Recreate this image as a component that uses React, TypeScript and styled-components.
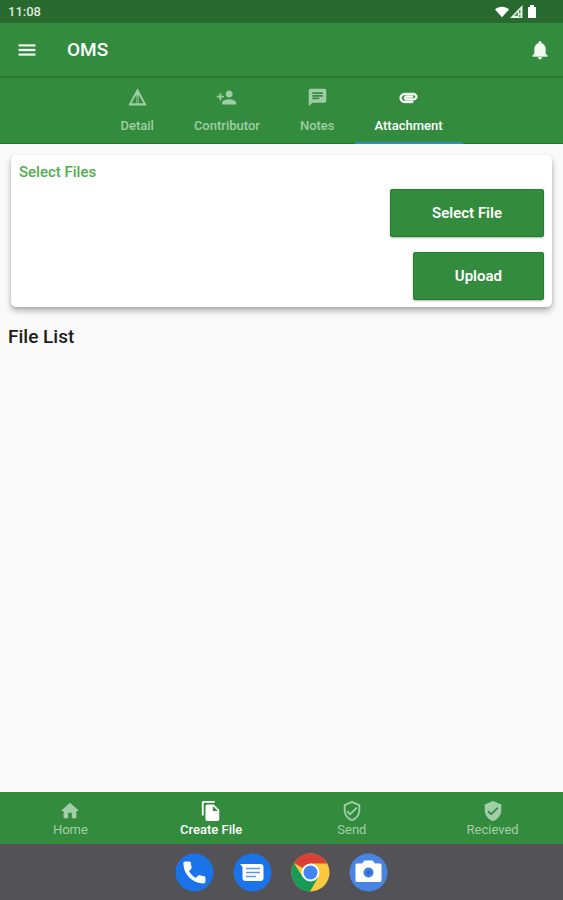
import React, { useState } from "react";
import styled, { createGlobalStyle } from "styled-components";

const GlobalStyle = createGlobalStyle`
  *, *::before, *::after { box-sizing: border-box; }
  body {
    margin: 0;
    background: #fafafa;
    font-family: Roboto, "Liberation Sans", sans-serif;
    color: #1c1c1c;
  }
  button { font: inherit; border: 0; cursor: pointer; }
`;

const GREEN = "#338c3e";

const Screen = styled.div`
  display: flex;
  flex-direction: column;
  min-height: 100vh;
`;

const StatusBar = styled.div`
  display: flex;
  align-items: center;
  justify-content: space-between;
  height: 23px;
  padding: 0 24px 0 8px;
  background: #28692f;
  color: #dcebdd;
  font-size: 13px;
  font-weight: 500;
`;

const StatusIcons = styled.div`
  display: flex;
  align-items: center;
  gap: 1px;
  color: #fff;
`;

const AppBar = styled.header`
  display: flex;
  align-items: center;
  gap: 29px;
  height: 53px;
  padding: 0 12px 0 16px;
  background: ${GREEN};
  color: #fff;
`;

const IconButton = styled.button`
  display: flex;
  padding: 0;
  background: none;
  color: #f2faf2;
`;

const Title = styled.h1`
  flex: 1;
  margin: 0;
  font-size: 19px;
  line-height: 24px;
  font-weight: 500;
`;

const TabBar = styled.div`
  display: flex;
  justify-content: center;
  height: 68px;
  background: ${GREEN};
  box-shadow: inset 0 3px 2px -1px #2a7833, inset 0 -1px 0 #16801f;
`;

const Tab = styled.button<{ $active: boolean }>`
  display: flex;
  flex-direction: column;
  align-items: center;
  gap: 10px;
  padding: 11px 20px 0;
  background: none;
  border-bottom: 2px solid ${(p) => (p.$active ? "#2f8fc4" : "transparent")};
  color: ${(p) => (p.$active ? "#fff" : "#a0cda5")};
  font-size: 13px;
  line-height: 16px;
  font-weight: 500;
`;

const Content = styled.main`
  flex: 1;
  padding: 11px 8px;
`;

const Card = styled.section`
  display: flex;
  flex-direction: column;
  margin: 0 3px;
  padding: 7px 8px;
  border-radius: 5px;
  background: #fff;
  box-shadow: 0 4px 6px rgba(0, 0, 0, 0.28), 0 1px 3px rgba(0, 0, 0, 0.1);
`;

const CardTitle = styled.h2`
  margin: 0 0 7px;
  color: #4caf50;
  font-size: 15px;
  line-height: 20px;
  font-weight: 500;
`;

const Actions = styled.div`
  display: flex;
  flex-direction: column;
  align-items: flex-end;
  gap: 15px;
`;

const ActionButton = styled.button`
  height: 48px;
  padding: 0 42px;
  border-radius: 3px;
  background: ${GREEN};
  box-shadow: 0 1px 2px rgba(0, 0, 0, 0.3), inset 0 0 0 1px #1f8229;
  color: #fff;
  font-size: 15px;
  font-weight: 600;
`;

const ListTitle = styled.h2`
  margin: 18px 0 0;
  font-size: 19px;
  line-height: 24px;
  font-weight: 500;
`;

const BottomNav = styled.nav`
  display: grid;
  grid-template-columns: repeat(4, 1fr);
  height: 52px;
  background: ${GREEN};
`;

const NavItem = styled.button<{ $active: boolean }>`
  display: flex;
  flex-direction: column;
  align-items: center;
  padding: 8px 0 0;
  background: none;
  color: ${(p) => (p.$active ? "#fff" : "#a3cfa8")};
  font-size: 13px;
  line-height: 15px;
  font-weight: ${(p) => (p.$active ? 500 : 400)};
`;

const Dock = styled.footer`
  display: flex;
  justify-content: center;
  gap: 19px;
  height: 56px;
  padding-top: 9px;
  background: #535256;
`;

type GlyphProps = { d: string; size: number; box?: string; height?: number; stroke?: number };

const Glyph = ({ d, size, height, box = "0 0 24 24", stroke = 0 }: GlyphProps) => (
  <svg
    width={size}
    height={height ?? size}
    viewBox={box}
    fill="currentColor"
    fillRule="evenodd"
    stroke="currentColor"
    strokeWidth={stroke}
    aria-hidden="true"
  >
    <path d={d} />
  </svg>
);

const paths = {
  menu: "M3 18h18v-2H3v2zm0-5h18v-2H3v2zm0-7v2h18V6H3z",
  bell: "M12 22c1.1 0 2-.9 2-2h-4c0 1.1.89 2 2 2zm6-6v-5c0-3.07-1.64-5.64-4.5-6.32V4c0-.83-.67-1.5-1.5-1.5s-1.5.67-1.5 1.5v.68C7.63 5.36 6 7.92 6 11v5l-2 2v1h16v-1l-2-2z",
  detail: "M12 1.500 1.500 21h21L12 1.500zM10.800 8.500V18.500H5.200zM13.200 8.500 18.800 18.500h-5.600zM11.600 11h.8v7.500h-.8z",
  contributor: "M15 12c2.210 0 4-1.790 4-4s-1.790-4-4-4-4 1.790-4 4 1.790 4 4 4zm-9-2V7H4v3H1v2h3v3h2v-3h3v-2H6zm9 4c-2.670 0-8 1.340-8 4v2h16v-2c0-2.660-5.330-4-8-4z",
  notes: "M20 2H4c-1.100 0-1.990.9-1.990 2L2 22l4-4h14c1.100 0 2-.9 2-2V4c0-1.100-.9-2-2-2zM6 9h12v2H6V9zm8 5H6v-2h8v2zm4-6H6V6h12v2z",
  clip: "M2 12.500C2 9.460 4.460 7 7.500 7H18c2.210 0 4 1.790 4 4s-1.790 4-4 4H9.500C8.120 15 7 13.880 7 12.500S8.120 10 9.500 10H17v2H9.410c-.550 0-.550 1 0 1H18c1.100 0 2-.9 2-2s-.9-2-2-2H7.500C5.570 9 4 10.570 4 12.500S5.570 16 7.500 16H17v2H7.500C4.460 18 2 15.540 2 12.500z",
  home: "M10 20v-6h4v6h5v-8h3L12 3 2 12h3v8z",
  copy: "M16 1H4c-1.100 0-2 .9-2 2v14h2V3h12V1zm-1 4 6 6v10c0 1.100-.9 2-2 2H7.990C6.890 23 6 22.100 6 21l.010-14c0-1.100.890-2 1.990-2h7zm-1 7h5.500L14 6.500V12z",
  shieldLine: "M12 1 3 5v6c0 5.550 3.840 10.740 9 12 5.160-1.260 9-6.450 9-12V5l-9-4zm7 10c0 4.520-2.980 8.690-7 9.930-4.020-1.240-7-5.410-7-9.930V6.300l7-3.110 7 3.110V11zm-11.590.590L6 13l4 4 8-8-1.410-1.420L10 14.170z",
  shield: "M12 1 3 5v6c0 5.550 3.840 10.740 9 12 5.160-1.260 9-6.450 9-12V5l-9-4zm-2 16-4-4 1.410-1.410L10 14.170l6.590-6.590L18 9l-8 8z",
  wifi: "M0 3C4-1 12-1 16 3L8 12z",
  battery: "M3 2V0h4v2h2v11H1V2z",
  phone: "M6.620 10.790c1.440 2.830 3.760 5.140 6.590 6.590l2.200-2.200c.270-.270.670-.360 1.020-.240 1.120.370 2.330.570 3.570.570.550 0 1 .450 1 1V20c0 .550-.450 1-1 1-9.390 0-17-7.610-17-17 0-.550.450-1 1-1h3.500c.550 0 1 .450 1 1 0 1.250.2 2.450.570 3.570.110.350.030.740-.250 1.020l-2.200 2.200z",
};

const SignalIcon = () => (
  <svg width="13" height="13" viewBox="0 0 13 13" aria-hidden="true">
    <path d="M12.500 0v13H0z" fill="#e3f0e4" />
    <path d="M9 5h1.500v3.500H9zM9 10h1.500v2H9zM4 11l4-4v4z" fill="#5f9565" />
  </svg>
);

const PhoneApp = () => (
  <svg width="39" height="39" viewBox="0 0 39 39" aria-hidden="true">
    <circle cx="19.500" cy="19.500" r="19" fill="#1a73e8" />
    <path d={paths.phone} fill="#fff" stroke="#fff" strokeWidth="1" transform="translate(5.500 5.500) scale(1.160)" />
  </svg>
);

const MessagesApp = () => (
  <svg width="39" height="39" viewBox="0 0 39 39" aria-hidden="true">
    <circle cx="19.500" cy="19.500" r="19" fill="#1a73e8" />
    <path d="M7 11h20.500a3 3 0 0 1 3 3v11a3 3 0 0 1-3 3h-15a3 3 0 0 1-3-3V14z" fill="#fff" />
    <path d="M13 15.500h14M13 19.500h14M13 23.500h10" stroke="#5f94e8" strokeWidth="1.600" />
  </svg>
);

const BrowserApp = () => (
  <svg width="39" height="39" viewBox="0 0 39 39" aria-hidden="true">
    <circle cx="19.500" cy="19.500" r="19" fill="#fbc93d" />
    <path d="M3.050 10A19 19 0 0 1 36.200 10.500L19.500 10.500V19.500z" fill="#d93f35" />
    <path d="M3.050 10A19 19 0 0 0 19 38.500l8.300-14.500-7.800-4.500-7.800 4.500z" fill="#179b57" />
    <circle cx="19.500" cy="19.500" r="9" fill="#fff" />
    <circle cx="19.500" cy="19.500" r="7" fill="#4285f4" />
  </svg>
);

const CameraApp = () => (
  <svg width="39" height="39" viewBox="0 0 39 39" aria-hidden="true">
    <circle cx="19.500" cy="19.500" r="19" fill="#4a84e2" />
    <path d="M8 10.500h5l2.500-3h8l2.500 3h5a1.500 1.500 0 0 1 1.500 1.500v15.500a1.500 1.500 0 0 1-1.500 1.500H8a1.500 1.500 0 0 1-1.500-1.500V12A1.500 1.500 0 0 1 8 10.500z" fill="#fff" />
    <circle cx="19.500" cy="19.500" r="5" fill="#3f7de0" />
    <circle cx="19.500" cy="19.500" r="2" fill="#2d66c8" />
  </svg>
);

const DockButton = styled(IconButton)`
  height: 39px;
  border-radius: 50%;
`;

const tabs = [
  { label: "Detail", d: paths.detail, stroke: 0 },
  { label: "Contributor", d: paths.contributor, stroke: 0 },
  { label: "Notes", d: paths.notes, stroke: 0 },
  { label: "Attachment", d: paths.clip, stroke: 0.7 },
];

const navItems = [
  { label: "Home", d: paths.home },
  { label: "Create File", d: paths.copy },
  { label: "Send", d: paths.shieldLine },
  { label: "Recieved", d: paths.shield },
];

const dockApps = [
  { label: "Phone", Icon: PhoneApp },
  { label: "Messages", Icon: MessagesApp },
  { label: "Browser", Icon: BrowserApp },
  { label: "Camera", Icon: CameraApp },
];

export default function App() {
  const [tab, setTab] = useState("Attachment");
  const [page, setPage] = useState("Create File");

  return (
    <Screen>
      <GlobalStyle />
      <StatusBar>
        <span>11:08</span>
        <StatusIcons>
          <Glyph d={paths.wifi} size={14} height={12} box="0 0 16 12" />
          <SignalIcon />
          <Glyph d={paths.battery} size={15} height={13} box="-3 0 15 13" />
        </StatusIcons>
      </StatusBar>
      <AppBar>
        <IconButton aria-label="Menu">
          <Glyph d={paths.menu} size={22} stroke={0.4} />
        </IconButton>
        <Title>OMS</Title>
        <IconButton aria-label="Notifications">
          <Glyph d={paths.bell} size={22} stroke={0.4} />
        </IconButton>
      </AppBar>
      <TabBar role="tablist">
        {tabs.map(({ label, d, stroke }) => (
          <Tab key={label} role="tab" aria-selected={tab === label} $active={tab === label} onClick={() => setTab(label)}>
            <Glyph d={d} size={21} stroke={stroke} />
            {label}
          </Tab>
        ))}
      </TabBar>
      <Content>
        <Card>
          <CardTitle>Select Files</CardTitle>
          <Actions>
            <ActionButton>Select File</ActionButton>
            <ActionButton>Upload</ActionButton>
          </Actions>
        </Card>
        <ListTitle>File List</ListTitle>
      </Content>
      <BottomNav>
        {navItems.map(({ label, d }) => (
          <NavItem key={label} $active={page === label} onClick={() => setPage(label)}>
            <Glyph d={d} size={22} />
            {label}
          </NavItem>
        ))}
      </BottomNav>
      <Dock>
        {dockApps.map(({ label, Icon }) => (
          <DockButton key={label} aria-label={label}>
            <Icon />
          </DockButton>
        ))}
      </Dock>
    </Screen>
  );
}
